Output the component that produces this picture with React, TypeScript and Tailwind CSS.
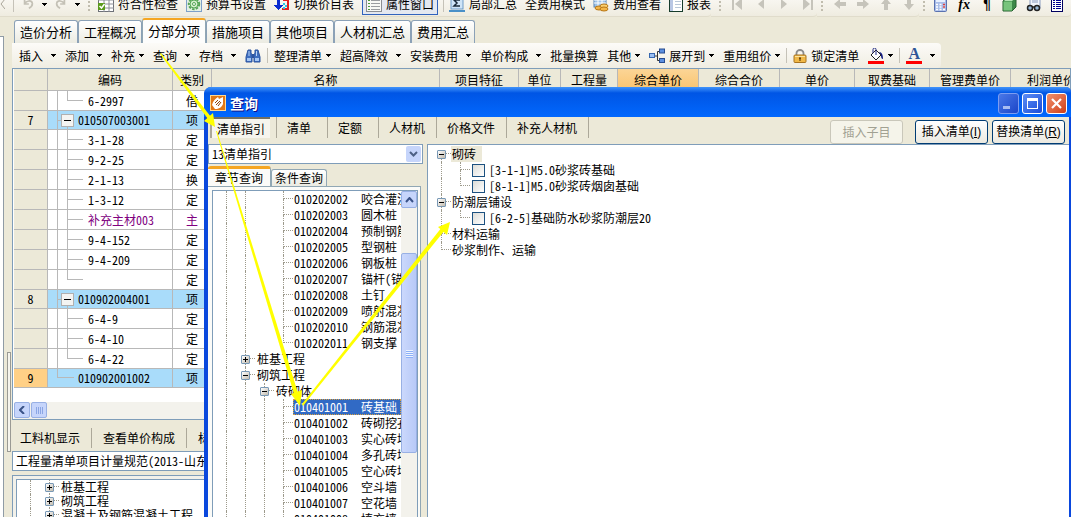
import React, { useState } from "react";

type Guide = "|" | " " | "t" | "l" | "+" | "-";

interface TreeItem {
  guides: Guide[];
  label: string;
  name?: string;
  selected?: boolean;
}

interface BillRow {
  no?: string;
  code: string;
  kind: string;
  level: "parent" | "child" | "lastChild" | "lastParent";
  extra?: boolean;
}

const columns = [
  { title: "", width: "w-[34px]" },
  { title: "编码", width: "w-[125px]" },
  { title: "类别", width: "w-[39px]" },
  { title: "名称", width: "w-[228px]" },
  { title: "项目特征", width: "w-[79px]" },
  { title: "单位", width: "w-[42px]" },
  { title: "工程量", width: "w-[57px]" },
  { title: "综合单价", width: "w-[81px]" },
  { title: "综合合价", width: "w-[81px]" },
  { title: "单价", width: "w-[75px]" },
  { title: "取费基础", width: "w-[75px]" },
  { title: "管理费单价", width: "w-[81px]" },
  { title: "利润单价", width: "w-[81px]" },
];

const billRows: BillRow[] = [
  { code: "6-2997", kind: "借", level: "lastChild" },
  { no: "7", code: "010507003001", kind: "项", level: "parent" },
  { code: "3-1-28", kind: "定", level: "child" },
  { code: "9-2-25", kind: "定", level: "child" },
  { code: "2-1-13", kind: "换", level: "child" },
  { code: "1-3-12", kind: "定", level: "child" },
  { code: "补充主材003", kind: "主", level: "child", extra: true },
  { code: "9-4-152", kind: "定", level: "child" },
  { code: "9-4-209", kind: "定", level: "child" },
  { code: "", kind: "定", level: "lastChild" },
  { no: "8", code: "010902004001", kind: "项", level: "parent" },
  { code: "6-4-9", kind: "定", level: "child" },
  { code: "6-4-10", kind: "定", level: "child" },
  { code: "6-4-22", kind: "定", level: "lastChild" },
  { no: "9", code: "010902001002", kind: "项", level: "lastParent" },
];

const chapterTree: TreeItem[] = [
  { guides: ["|", "|", " ", "t"], label: "010202002", name: "咬合灌注桩" },
  { guides: ["|", "|", " ", "t"], label: "010202003", name: "圆木桩" },
  { guides: ["|", "|", " ", "t"], label: "010202004", name: "预制钢筋混凝土板桩" },
  { guides: ["|", "|", " ", "t"], label: "010202005", name: "型钢桩" },
  { guides: ["|", "|", " ", "t"], label: "010202006", name: "钢板桩" },
  { guides: ["|", "|", " ", "t"], label: "010202007", name: "锚杆(锚索)" },
  { guides: ["|", "|", " ", "t"], label: "010202008", name: "土钉" },
  { guides: ["|", "|", " ", "t"], label: "010202009", name: "喷射混凝土" },
  { guides: ["|", "|", " ", "t"], label: "010202010", name: "钢筋混凝土支撑" },
  { guides: ["|", "|", " ", "l"], label: "010202011", name: "钢支撑" },
  { guides: ["|", "+"], label: "桩基工程" },
  { guides: ["|", "-"], label: "砌筑工程" },
  { guides: ["|", "|", "-"], label: "砖砌体" },
  { guides: ["|", "|", "|", "t"], label: "010401001", name: "砖基础", selected: true },
  { guides: ["|", "|", "|", "t"], label: "010401002", name: "砖砌挖孔桩护壁" },
  { guides: ["|", "|", "|", "t"], label: "010401003", name: "实心砖墙" },
  { guides: ["|", "|", "|", "t"], label: "010401004", name: "多孔砖墙" },
  { guides: ["|", "|", "|", "t"], label: "010401005", name: "空心砖墙" },
  { guides: ["|", "|", "|", "t"], label: "010401006", name: "空斗墙" },
  { guides: ["|", "|", "|", "t"], label: "010401007", name: "空花墙" },
  { guides: ["|", "|", "|", "t"], label: "010401008", name: "填充墙" },
];

const Caret = () => (
  <svg width="5" height="3" viewBox="0 0 5 3" className="shrink-0" shapeRendering="crispEdges">
    <path d="M0 0h5v1H4v1H3v1H2V2H1V1H0z" fill="#000" />
  </svg>
);

const Separator = () => <span className="-mx-[3px] h-[15px] w-px shrink-0 bg-[#c5c2b8]" />;

const Grip = () => (
  <span className="flex shrink-0 flex-col gap-0.5">
    {[0, 1, 2, 3].map((dot) => (
      <span key={dot} className="h-0.5 w-0.5 bg-[#c1bdae]" />
    ))}
  </span>
);

const Expander: React.FC<{ open: boolean }> = ({ open }) => (
  <button
    aria-label={open ? "折叠" : "展开"}
    className="flex h-[9px] w-[9px] items-center justify-center rounded-[1px] border border-[#7898b5] bg-linear-to-br from-white to-[#c3bcaf]"
  >
    <svg width="5" height="5" viewBox="0 0 5 5" className="shrink-0" shapeRendering="crispEdges">
      <path d={open ? "M0 2h5v1H0z" : "M0 2h5v1H0zM2 0h1v5H2z"} fill="#000" />
    </svg>
  </button>
);

const GuideCell: React.FC<{ guide: Guide; first?: boolean }> = ({ guide, first }) => {
  if (guide === "+" || guide === "-") {
    return (
      <span className="grid h-full w-[19px] shrink-0">
        <span className="flex flex-col pl-[9px] [grid-area:1/1]">
          <span
            className={`h-1/2 border-b border-dotted border-[#9d9a8c] ${first ? "" : "border-l"}`}
          />
          <span className="h-1/2 border-l border-dotted border-[#9d9a8c]" />
        </span>
        <span className="flex items-center pl-[5px] [grid-area:1/1]">
          <Expander open={guide === "-"} />
        </span>
      </span>
    );
  }
  return (
    <span className="flex h-full w-[19px] shrink-0 flex-col pl-[9px]">
      {guide === "|" && <span className="h-full border-l border-dotted border-[#9d9a8c]" />}
      {guide !== "|" && guide !== " " && (
        <span className="h-1/2 border-b border-l border-dotted border-[#9d9a8c]" />
      )}
      {guide === "t" && <span className="h-1/2 border-l border-dotted border-[#9d9a8c]" />}
    </span>
  );
};

/* toolbar icons */

const Undo: React.FC<{ flip?: boolean }> = ({ flip }) => (
  <svg width="12" height="14" viewBox="0 0 14 14" className={flip ? "shrink-0 -scale-x-100" : "shrink-0"}>
    <path d="M3 2v5h5M3 7c2-4 8-5 9-1 .5 3-2 5-4 6" fill="none" stroke="#c4c1b6" strokeWidth="2" />
  </svg>
);

const GridCheck = () => (
  <svg width="16" height="16" viewBox="0 0 16 16" className="shrink-0">
    <rect x=".5" y=".5" width="15" height="15" fill="#fff" stroke="#6e7178" />
    <path d="M0 4h16M0 8h16M0 12h16M6 0v16M11 0v16" stroke="#8c8f96" />
    <rect x="0" y="7" width="7" height="7" fill="#5a9a1c" />
    <path d="m1.5 10 2 2 3-4" fill="none" stroke="#fff" strokeWidth="1.5" />
  </svg>
);

const GearDoc = () => (
  <svg width="16" height="16" viewBox="0 0 16 16" className="shrink-0">
    <rect x=".5" y=".5" width="15" height="15" fill="#e4f0e4" stroke="#7ea0c8" />
    <circle cx="8" cy="8" r="5.2" fill="none" stroke="#56a556" strokeWidth="2" strokeDasharray="2.5 1.2" />
    <circle cx="8" cy="8" r="4" fill="#d5f0cc" stroke="#56a556" />
    <circle cx="8" cy="8" r="1.5" fill="#fff" stroke="#56a556" />
  </svg>
);

const SwapTable = () => (
  <svg width="16" height="16" viewBox="0 0 16 16" className="shrink-0" shapeRendering="crispEdges">
    <path d="M3 1h3v8h3l-4.5 5L0 9h3z" fill="#0a2bd0" />
    <path d="M9 3h6v11H8v-2h5V5H9z" fill="#e02020" />
    <path d="M9 7h2v2H9zM11 9h2v2h-2zM9 11h2v2H9z" fill="#28c8e8" />
  </svg>
);

const ListIcon = () => (
  <svg width="16" height="16" viewBox="0 0 16 16" className="shrink-0" shapeRendering="crispEdges">
    <rect x=".5" y=".5" width="15" height="15" fill="#f8f9f5" stroke="#8a8d92" />
    <path d="M2 4h2M2 7h2M2 10h2M2 13h2" stroke="#4e9c3c" />
    <path d="M5 4h9M5 7h9M5 10h9M5 13h9" stroke="#9a9da0" />
  </svg>
);

const SumIcon = () => (
  <svg width="16" height="16" viewBox="0 0 16 16" className="shrink-0">
    <rect x="2" y="0" width="12" height="13" fill="#cfe4f7" stroke="#6f9cc8" />
    <path d="M11 4H5l3 3-3 3h6" fill="none" stroke="#182838" strokeWidth="1.5" />
    <path d="M0 15h16" stroke="#4a90c8" strokeWidth="2" />
  </svg>
);

const CoinsIcon = () => (
  <svg width="16" height="16" viewBox="0 0 16 16" className="shrink-0">
    <rect x="1" y="0" width="12" height="11" fill="#9fc4ea" stroke="#5a86b8" />
    <path d="M1 4h12M1 7h12M5 0v11M9 0v11" stroke="#fff" />
    <ellipse cx="6" cy="12" rx="4" ry="2" fill="#f3b64a" stroke="#b87818" />
    <ellipse cx="11" cy="10" rx="4" ry="2" fill="#fbd070" stroke="#b87818" />
    <ellipse cx="11" cy="13" rx="4" ry="2" fill="#f3b64a" stroke="#b87818" />
  </svg>
);

const ReportIcon = () => (
  <svg width="14" height="16" viewBox="0 0 14 16" className="shrink-0" shapeRendering="crispEdges">
    <rect x=".5" y=".5" width="13" height="15" fill="#fff" stroke="#163c2c" />
    <path d="M1 1h3v14H1z" fill="#b9c7e4" />
    <path d="M6 5h6M6 8h6M6 11h6" stroke="#b9c7d8" />
  </svg>
);

const NavIcon: React.FC<{ shape: string }> = ({ shape }) => (
  <svg width="12" height="12" viewBox="0 0 12 12" className="shrink-0">
    <path d={shape} fill="#c6c4bb" />
  </svg>
);

const Calculator = () => (
  <svg width="13" height="15" viewBox="0 0 13 15" className="shrink-0">
    <rect x=".5" y=".5" width="12" height="14" rx="1" fill="#a9bde8" stroke="#5a72b0" />
    <rect x="2" y="2" width="9" height="3" fill="#e8f0ff" />
    <path d="M2 7.5h9M2 10h9M2 12.5h9" stroke="#fff" strokeWidth="1.5" strokeDasharray="2 1.5" />
    <path d="M9 7.5h2M9 10h2" stroke="#d84040" strokeWidth="1.5" />
  </svg>
);

const Cube = () => (
  <svg width="15" height="15" viewBox="0 0 15 15" className="shrink-0">
    <path d="M1 4l4-3h9v9l-4 4H1z" fill="#3c8848" stroke="#27602f" />
    <path d="M1.5 4.5H10v9H1.5z" fill="#78c47c" />
    <path d="M2 4l3-2.5h8L10 4z" fill="#b4e4b4" />
  </svg>
);

const FindDoc = () => (
  <svg width="16" height="16" viewBox="0 0 16 16" className="shrink-0">
    <rect x="4" y="0" width="10" height="12" fill="#f0f4fc" stroke="#8a9cc0" />
    <path d="M6 4h6M6 6h6" stroke="#8a9cc0" />
    <circle cx="4" cy="12" r="2.5" fill="#98b8d8" stroke="#222" strokeWidth="1.5" />
    <circle cx="11" cy="12" r="2.5" fill="#98b8d8" stroke="#222" strokeWidth="1.5" />
    <path d="M6 11h3" stroke="#222" strokeWidth="1.5" />
  </svg>
);

const BlueList = () => (
  <svg width="12" height="15" viewBox="0 0 12 15" className="shrink-0" shapeRendering="crispEdges">
    <rect x=".5" y=".5" width="11" height="14" fill="#fff" stroke="#000060" />
    <path d="M2 3.5h2M2 5.5h2M2 7.5h2M2 9.5h2M2 11.5h2M5 3.5h5M5 5.5h5M5 7.5h5M5 9.5h5M5 11.5h5" stroke="#000090" />
  </svg>
);

const Binoculars = () => (
  <svg width="16" height="14" viewBox="0 0 16 14" className="shrink-0">
    <path d="M3 1h3v3l1 2v7H1V8z" fill="#3f6fc0" stroke="#2d55a0" />
    <path d="M10 1h3l2 7v5H9V6l1-2z" fill="#3f6fc0" stroke="#2d55a0" />
    <path d="M7 5h2v4H7z" fill="#2d55a0" />
    <path d="M2 9h4v3H2zM10 9h4v3h-4z" fill="#a5c6f3" />
    <path d="M4 2v5M11.5 2v5" stroke="#b9d2f5" />
  </svg>
);

const NodesIcon = () => (
  <svg width="16" height="16" viewBox="0 0 16 16" className="shrink-0">
    <path d="M5 8h3M14 3.5H8.5v9H11" fill="none" stroke="#333" />
    <rect x=".5" y="5.5" width="5" height="4" fill="#9cc0f4" stroke="#3868b0" />
    <rect x="10.5" y="1" width="5" height="4" fill="#5d90e0" stroke="#284c90" />
    <rect x="10.5" y="10.5" width="5" height="4" fill="#5d90e0" stroke="#284c90" />
  </svg>
);

const Lock = () => (
  <svg width="14" height="14" viewBox="0 0 14 14" className="shrink-0">
    <path d="M3.5 7V4a3.5 3 0 0 1 7 0v3" fill="none" stroke="#8c8c8c" strokeWidth="1.8" />
    <rect x="1" y="6" width="12" height="7.5" rx="1" fill="#f0b848" stroke="#a87420" />
    <path d="M2 7.5h10" stroke="#fce4a0" />
    <path d="M7 8v4M6 9.5h2" stroke="#6b4510" strokeWidth="1.2" />
  </svg>
);

const Bucket = () => (
  <svg width="16" height="16" viewBox="0 0 16 16" className="shrink-0">
    <path d="M8 2l5 5-5 5-5-5z" fill="#fff" stroke="#222" />
    <path d="M5 5V1.5A1.5 1.5 0 0 1 8 1.5V7" fill="none" stroke="#222b80" />
    <path d="M11 4c3 0 4 3 4 7-1.5 0-2-1.5-2-4z" fill="#101880" />
    <path d="M0 13h16v3H0z" fill="#f00" />
  </svg>
);

const ArrowOverlay = () => (
  <svg
    className="pointer-events-none absolute top-0 left-0 z-20"
    width="470"
    height="420"
    viewBox="0 0 470 420"
    fill="#ff0"
  >
    <path d="M161 53l50 64-3 2-48-65z" />
    <path d="M215 127l-11-6 9-8z" />
    <path d="M217 131l81 262-4 1L216 131z" />
    <path d="M300 406l-9-12 11-4z" />
    <path d="M302 404l140-177 3 3-142 176z" />
    <path d="M450 222l-3 13-9-8z" />
  </svg>
);

interface ToolItemProps {
  text?: string;
  icon?: React.ReactNode;
  caret?: "near" | "far";
  label?: string;
}

const ToolItem: React.FC<ToolItemProps> = ({ text, icon, caret, label }) => (
  <button
    aria-label={label}
    className={`flex shrink-0 items-center whitespace-nowrap ${caret === "far" ? "gap-2" : "gap-1"}`}
  >
    {icon}
    {text && <span>{text}</span>}
    {caret && <Caret />}
  </button>
);

const TopToolbar = () => {
  const band =
    "flex h-full items-center rounded-r-sm bg-linear-to-b from-[#fcfbf8] to-[#efece0] border-b border-[#e0dccb]";
  return (
    <header className="-mt-2 flex h-[25px] shrink-0 overflow-hidden">
      <div className={`${band} gap-2`}>
        <svg width="5" height="10" viewBox="0 0 5 10" className="shrink-0">
          <path d="M5 0L1 5l4 5" fill="none" stroke="#aaa69a" />
        </svg>
        <span className="h-[15px] w-px bg-[#c5c2b8]" />
        <ToolItem icon={<Undo />} caret="far" label="撤销" />
        <ToolItem icon={<Undo flip />} caret="far" label="恢复" />
        <Grip />
        <ToolItem icon={<GridCheck />} text="符合性检查" />
        <ToolItem icon={<GearDoc />} text="预算书设置" />
        <ToolItem icon={<SwapTable />} text="切换价目表" />
        <button className="flex h-[22px] shrink-0 items-center gap-1 border border-[#3163bd] bg-[#e4e8f0] px-[3px] whitespace-nowrap">
          <ListIcon />
          属性窗口
        </button>
        <Separator />
        <ToolItem icon={<SumIcon />} text="局部汇总" />
        <ToolItem text="全费用模式" />
        <ToolItem icon={<CoinsIcon />} text="费用查看" />
        <ToolItem icon={<ReportIcon />} text="报表" />
      </div>
      <div className={`${band} gap-[11px] pr-1 pl-2`}>
        <Grip />
        <ToolItem icon={<NavIcon shape="M0 0h2v12H0zM10 0v12L3 6z" />} label="首条" />
        <ToolItem icon={<NavIcon shape="M9 1v10L3 6z" />} label="上一条" />
        <ToolItem icon={<NavIcon shape="M3 1v10l6-5z" />} label="下一条" />
        <ToolItem icon={<NavIcon shape="M10 0h2v12h-2zM2 0v12l7-6z" />} label="末条" />
      </div>
      <div className={`${band} gap-[11px] pr-1 pl-1`}>
        <Grip />
        <ToolItem icon={<NavIcon shape="M0 6l6-5v3h6v4H6v3z" />} label="左移" />
        <ToolItem icon={<NavIcon shape="M12 6L6 1v3H0v4h6v3z" />} label="右移" />
        <ToolItem icon={<NavIcon shape="M6 0l5 6H8v6H4V6H1z" />} label="上移" />
        <ToolItem icon={<NavIcon shape="M6 12l5-6H8V0H4v6H1z" />} label="下移" />
      </div>
      <div className={`${band} gap-[9px] pr-2 pl-1`}>
        <Grip />
        <ToolItem icon={<Calculator />} label="计算器" />
        <button className="w-4 font-['Liberation_Serif',serif] text-[14px] font-bold italic">fx</button>
        <button className="w-3 font-['Liberation_Sans',sans-serif] text-[14px] font-bold">¶</button>
        <ToolItem icon={<Cube />} label="三维" />
        <ToolItem icon={<FindDoc />} label="查找" />
        <ToolItem icon={<BlueList />} label="列表" />
      </div>
    </header>
  );
};

const moduleTabs = ["造价分析", "工程概况", "分部分项", "措施项目", "其他项目", "人材机汇总", "费用汇总"];

const ModuleTabs = () => {
  const [active, setActive] = useState("分部分项");
  return (
    <nav className="flex h-[26px] shrink-0 items-end pl-0.5">
      {moduleTabs.map((tab) => (
        <button
          key={tab}
          onClick={() => setActive(tab)}
          className={`shrink-0 rounded-t-[3px] border-x px-[5px] text-[13px] whitespace-nowrap ${
            active === tab
              ? "h-[25px] border-t-2 border-x-[#91a7b4] border-t-[#f5a623] bg-[#fdfdfc] pb-0.5"
              : "h-[23px] border-t border-[#8ba1b7] bg-linear-to-b from-white to-[#ebebe2]"
          }`}
        >
          {tab}
        </button>
      ))}
    </nav>
  );
};

const EditToolbar = () => (
  <div className="flex h-[25px] w-fit shrink-0 items-center gap-[9px] rounded-r-sm bg-linear-to-b from-[#fcfbf8] to-[#f0ede2] pr-1.5 pl-[7px]">
    <ToolItem text="插入" caret="far" />
    <ToolItem text="添加" caret="far" />
    <ToolItem text="补充" caret="near" />
    <ToolItem text="查询" caret="far" />
    <ToolItem text="存档" caret="far" />
    <ToolItem icon={<Binoculars />} label="查找" />
    <Separator />
    <ToolItem text="整理清单" caret="near" />
    <ToolItem text="超高降效" caret="far" />
    <ToolItem text="安装费用" caret="far" />
    <ToolItem text="单价构成" caret="far" />
    <ToolItem text="批量换算" />
    <ToolItem text="其他" caret="near" />
    <ToolItem icon={<NodesIcon />} text="展开到" caret="near" />
    <ToolItem text="重用组价" caret="near" />
    <Separator />
    <ToolItem icon={<Lock />} text="锁定清单" />
    <ToolItem icon={<Bucket />} caret="near" label="填充颜色" />
    <Separator />
    <button className="flex items-center gap-2" aria-label="字体颜色">
      <span className="flex h-4 w-4 items-end justify-center border-b-[3px] border-[#f00] font-['Liberation_Serif',serif] text-[16px] leading-[14px] font-bold text-[#2f5597]">
        A
      </span>
      <Caret />
    </button>
  </div>
);

const line = "border-[#b8b8b8]";

const CodeCell: React.FC<{ row: BillRow }> = ({ row }) => {
  if (row.level === "parent") {
    return (
      <div className="flex h-[18px] items-center pl-[9px]">
        <span className={`flex h-full w-1 items-center border-l ${line}`}>
          <span className={`w-full border-t ${line}`} />
        </span>
        <span className="flex h-full flex-col items-center pt-[3px]">
          <button
            aria-label="折叠"
            className="flex h-[13px] w-[13px] shrink-0 items-center justify-center border border-[#b0b0b0] bg-[#f4f4f2]"
          >
            <span className="h-px w-[7px] bg-black" />
          </button>
          <span className={`h-[2px] border-l ${line}`} />
        </span>
        <span className="pl-1">{row.code}</span>
      </div>
    );
  }
  if (row.level === "lastParent") {
    return (
      <div className="flex h-[18px] items-center pl-[9px]">
        <span className="flex h-full w-[17px] flex-col">
          <span className={`h-1/2 border-b border-l ${line}`} />
        </span>
        <span className="pl-1">{row.code}</span>
      </div>
    );
  }
  return (
    <div className="flex h-[19px] items-center pl-[9px]">
      <span className={`h-full w-[10px] border-l ${line}`} />
      <span className="flex h-full w-4 flex-col">
        <span className={`h-[10px] border-b border-l ${line}`} />
        {row.level === "child" && <span className={`h-[9px] border-l ${line}`} />}
      </span>
      <span className={`pl-[5px] whitespace-nowrap ${row.extra ? "text-[#800080]" : ""}`}>{row.code}</span>
    </div>
  );
};

const BillTable = () => (
  <section className="shrink-0 overflow-hidden border border-[#7f9db9] bg-white pl-px">
    <table className="w-[1078px] table-fixed border-separate border-spacing-0 leading-4">
      <thead>
        <tr>
          {columns.map((column, index) => (
            <th
              key={index}
              className={`h-[22px] border-r border-b border-[#b8b8b8] p-0 text-center font-normal ${column.width} ${
                column.title === "综合单价" ? "bg-linear-to-b from-[#fbd596] to-[#fac46e]" : "bg-[#ece9d8]"
              }`}
            >
              {column.title}
            </th>
          ))}
        </tr>
      </thead>
      <tbody>
        {billRows.map((row, index) => (
          <tr key={index} className={row.no ? "bg-[#a9dcfa]" : "bg-white"}>
            <td
              className={`border-r border-b p-0 text-center ${line} ${
                row.no === "9" ? "bg-[#ffd086]" : "bg-[#ece9d8]"
              }`}
            >
              {row.no}
            </td>
            <td className={`border-r border-b p-0 ${line}`}>
              <CodeCell row={row} />
            </td>
            <td
              className={`border-r border-b p-0 text-center ${line} ${row.extra ? "text-[#800080]" : ""}`}
            >
              {row.kind}
            </td>
            {columns.slice(3).map((column) => (
              <td key={column.title} className={`border-r border-b p-0 ${line}`} />
            ))}
          </tr>
        ))}
      </tbody>
    </table>
    <div className="mt-3.5 flex h-[17px] gap-px bg-[#f3f2ec] pb-px">
      <button
        aria-label="向左滚动"
        className="flex w-4 items-center justify-center rounded-xs border border-[#98b0e4] bg-[#c6d5fb]"
      >
        <svg width="6" height="8" viewBox="0 0 6 8">
          <path d="M5 0L1 4l4 4" fill="none" stroke="#3a5388" strokeWidth="2" />
        </svg>
      </button>
      <div className="flex w-4 items-center justify-center gap-px rounded-xs border border-[#98b0e4] bg-[#c6d5fb]">
        {[0, 1, 2, 3].map((mark) => (
          <span key={mark} className="h-[7px] w-px bg-[#8ba6e4]" />
        ))}
      </div>
    </div>
  </section>
);

const DetailTabs = () => (
  <nav className="flex h-[31px] shrink-0 items-center gap-[11px] pt-1 pl-2 whitespace-nowrap">
    <button>工料机显示</button>
    <span className="h-5 w-px bg-[#aca899]" />
    <button>查看单价构成</button>
    <span className="h-5 w-px bg-[#aca899]" />
    <button>标准换算</button>
  </nav>
);

const NormTree = () => (
  <section className="mt-1 flex-1 border border-b-0 border-[#7f9db9] bg-[#f2f1ea] px-[3px] pt-[3px]">
    <ul className="h-full border border-b-0 border-[#7f9db9] bg-white pl-1">
      {["桩基工程", "砌筑工程", "混凝土及钢筋混凝土工程"].map((name) => (
        <li key={name} className="flex h-3.5 items-center gap-0.5 leading-[14px] whitespace-nowrap">
          <span className="flex h-full">
            <GuideCell guide="|" />
            <GuideCell guide="+" />
          </span>
          {name}
        </li>
      ))}
    </ul>
  </section>
);

const ChapterTree = () => (
  <div className="flex min-h-0 flex-1 border border-b-0 border-[#7f9db9] bg-white">
    <ul className="min-w-0 flex-1 overflow-hidden pl-1">
      {chapterTree.map((item) => (
        <li key={item.label} className="flex h-4 items-center leading-4 whitespace-nowrap">
          {item.guides.map((guide, index) => (
            <GuideCell key={index} guide={guide} />
          ))}
          {item.name ? (
            <span
              className={`flex h-4 min-w-0 flex-1 items-center overflow-hidden ${
                item.selected ? "border border-dotted border-[#d8a040] bg-[#316ac5] text-white" : "pl-px"
              }`}
            >
              <span className="w-[67px] shrink-0">{item.label}</span>
              <span>{item.name}</span>
            </span>
          ) : (
            <span className="pl-0.5">{item.label}</span>
          )}
        </li>
      ))}
    </ul>
    <div className="flex w-4 shrink-0 flex-col bg-[#f3f2ec]">
      <button
        aria-label="向上滚动"
        className="flex h-[17px] items-center justify-center rounded-xs border border-[#98b0e4] bg-[#c6d5fb]"
      >
        <svg width="9" height="6" viewBox="0 0 9 6">
          <path d="M1 5l3.5-4L8 5" fill="none" stroke="#3a5388" strokeWidth="2" />
        </svg>
      </button>
      <div className="mt-[45px] flex h-[200px] flex-col items-center justify-center gap-px rounded-xs border border-[#98b0e4] bg-linear-to-r from-[#cbd8fc] to-[#b7c9f7]">
        {[0, 1, 2, 3].map((mark) => (
          <span key={mark} className="h-px w-[7px] bg-[#eef4fe] shadow-[0_1px_0_#8cb0f8]" />
        ))}
      </div>
    </div>
  </div>
);

const CheckItem: React.FC<{ text: string; last?: boolean }> = ({ text, last }) => (
  <li className="flex h-4 items-center">
    <GuideCell guide="|" />
    <GuideCell guide={last ? "l" : "t"} />
    <label className="flex items-center gap-1 pl-0.5 leading-4 whitespace-nowrap">
      <input
        type="checkbox"
        className="m-0 h-[13px] w-[13px] appearance-none border border-[#1c5180] bg-linear-to-br from-[#dcdcd7] to-white checked:bg-[#1c5180]"
      />
      {text}
    </label>
  </li>
);

const NodeItem: React.FC<{ text: string; guide: Guide; selected?: boolean }> = ({ text, guide, selected }) => (
  <li className="flex h-4 items-center leading-4 whitespace-nowrap">
    <GuideCell guide={guide} first={selected} />
    <span className={`h-4 ${selected ? "bg-[#ece9d8] pr-1.5 pl-px" : "pl-px"}`}>{text}</span>
  </li>
);

const guideTabs = ["清单指引", "清单", "定额", "人材机", "价格文件", "补充人材机"];

const QueryDialog = () => {
  const [source, setSource] = useState("清单指引");
  const actionButton =
    "h-[24px] w-[73px] rounded-[3px] border border-[#003c74] bg-linear-to-b from-white to-[#ebe9e0] whitespace-nowrap font-['Liberation_Sans','Noto_Sans_CJK_SC',sans-serif]";
  return (
    <div
      role="dialog"
      aria-label="查询"
      className="absolute top-[87px] right-0 bottom-0 left-[204px] z-10 flex flex-col overflow-hidden rounded-tl-[7px] rounded-tr-[5px] bg-[#0a48dd]"
    >
      <div className="flex h-[30px] shrink-0 items-center gap-1 bg-linear-to-b from-[#3f93fb] via-[#0055e5] via-20% to-[#0268fe] pt-0.5 pr-1 pl-1.5">
        <svg width="16" height="16" viewBox="0 0 16 16" className="shrink-0">
          <rect x=".5" y=".5" width="15" height="15" fill="#e07818" stroke="#ffd890" />
          <path d="M2 10c1-4 3-6 6-8l1 2 4-2v7c-1 3-4 5-8 5z" fill="#fff" />
          <path d="M5 8l3-3M6 10l4-4M8 11l3-4" stroke="#8a4208" />
        </svg>
        <h1 className="flex-1 text-[14px] font-bold text-white [text-shadow:1px_1px_#0f1089]">查询</h1>
        <div className="flex gap-[3px]">
          <button
            aria-label="最小化"
            className="flex h-[21px] w-[21px] items-end rounded-[3px] border border-[#7d9df0] bg-linear-to-br from-[#4a78e8] to-[#1c44c8] p-1"
          >
            <span className="h-[3px] w-[7px] bg-[#a9bdf2]" />
          </button>
          <button
            aria-label="最大化"
            className="flex h-[21px] w-[21px] items-center justify-center rounded-[3px] border border-white bg-linear-to-br from-[#5d8df5] to-[#1b4ad8]"
          >
            <span className="h-[11px] w-[11px] border border-t-[3px] border-white" />
          </button>
          <button
            aria-label="关闭"
            className="flex h-[21px] w-[21px] items-center justify-center rounded-[3px] border border-white bg-linear-to-br from-[#f0906c] to-[#cf3c10]"
          >
            <svg width="11" height="11" viewBox="0 0 11 11">
              <path d="M1 1l9 9M10 1l-9 9" stroke="#fff" strokeWidth="2.2" />
            </svg>
          </button>
        </div>
      </div>
      <div className="mr-0.5 ml-1 flex min-h-0 flex-1 flex-col bg-[#ece9d8]">
        <div className="flex h-[27px] shrink-0 items-start justify-between pr-1">
          <nav className="flex items-start">
            {guideTabs.map((tab) => (
              <span key={tab} className="flex h-[21px] border-r border-[#aca899] px-[2px]">
                <button
                  onClick={() => setSource(tab)}
                  className={`h-[21px] text-left whitespace-nowrap ${
                    source === tab
                      ? "mr-1 border-t-2 border-l-2 border-t-[#716f64] border-l-[#aca899] bg-[#f6f5ee] px-[5px]"
                      : "min-w-[46px] pr-[9px] pl-2"
                  }`}
                >
                  {tab}
                </button>
              </span>
            ))}
          </nav>
          <div className="flex gap-1 pt-[3px]">
            <button
              disabled
              className="mr-2 h-[24px] w-[73px] rounded-[3px] border border-[#c9c7ba] bg-[#f5f4ea] text-[#a1a192]"
            >
              插入子目
            </button>
            <button className={actionButton}>
              插入清单(<u>I</u>)
            </button>
            <button className={actionButton}>
              替换清单(<u>R</u>)
            </button>
          </div>
        </div>
        <div className="flex min-h-0 flex-1 gap-1">
          <div className="flex w-[215px] shrink-0 flex-col">
            <div className="relative h-5 shrink-0">
              <select
                aria-label="清单库"
                className="h-5 w-full appearance-none border border-[#7f9db9] bg-white px-[3px] text-[12px]"
              >
                <option>13清单指引</option>
              </select>
              <span className="pointer-events-none absolute top-0.5 right-0.5 flex h-4 w-[15px] items-center justify-center rounded-xs bg-[#c6d5fb]">
                <svg width="9" height="6" viewBox="0 0 9 6">
                  <path d="M1 1l3.5 3.5L8 1" fill="none" stroke="#4d6185" strokeWidth="2" />
                </svg>
              </span>
            </div>
            <div className="flex h-[22px] shrink-0 items-end">
              <button className="h-5 rounded-t-[3px] border-t-[3px] border-r border-t-[#f5a623] border-r-[#91a7b4] bg-[#fbfbf8] px-[7px] leading-4">
                章节查询
              </button>
              <button className="h-[17px] rounded-t-[3px] border border-b-0 border-[#91a7b4] bg-linear-to-b from-white to-[#ebebe2] px-[3px] leading-4">
                条件查询
              </button>
            </div>
            <div className="mr-0.5 flex min-h-0 flex-1 flex-col border-t border-r border-[#91a7b4] bg-[#fbfbf8] pt-[3px] pr-0.5 pl-1">
              <ChapterTree />
            </div>
          </div>
          <ul className="flex-1 border border-r-0 border-b-0 border-[#7f9db9] bg-white pt-px pl-1">
            <NodeItem guide="-" text="砌砖" selected />
            <CheckItem text="[3-1-1]M5.0砂浆砖基础" />
            <CheckItem text="[8-1-1]M5.0砂浆砖烟囱基础" last />
            <NodeItem guide="-" text="防潮层铺设" />
            <CheckItem text="[6-2-5]基础防水砂浆防潮层20" last />
            <NodeItem guide="t" text="材料运输" />
            <NodeItem guide="l" text="砂浆制作、运输" />
          </ul>
        </div>
      </div>
    </div>
  );
};

// "hwid" picks the half-width Latin glyphs, so codes take half an em per character
const App = () => (
  <div className="relative flex h-screen flex-col overflow-hidden bg-[#ece9d8] font-['Noto_Sans_CJK_SC',sans-serif] text-[12px] text-black [font-feature-settings:'hwid']">
    <TopToolbar />
    <div className="flex min-h-0 flex-1">
      <aside className="flex w-3 shrink-0 gap-[3px]">
        <span className="mt-[19px] w-1 border-t border-r border-[#8f9ba5] bg-white" />
        <span className="mt-[335px] h-[100px] w-1 border border-[#9a9a94] bg-[#f6f5ee]" />
      </aside>
      <main className="flex min-w-0 flex-1 flex-col">
        <ModuleTabs />
        <EditToolbar />
        <BillTable />
        <DetailTabs />
        <select
          aria-label="计量规范"
          className="h-5 w-full shrink-0 appearance-none border border-[#7f9db9] bg-white px-[3px] text-[12px]"
        >
          <option>工程量清单项目计量规范(2013-山东)</option>
        </select>
        <NormTree />
      </main>
    </div>
    <QueryDialog />
    <ArrowOverlay />
  </div>
);

export default App;
